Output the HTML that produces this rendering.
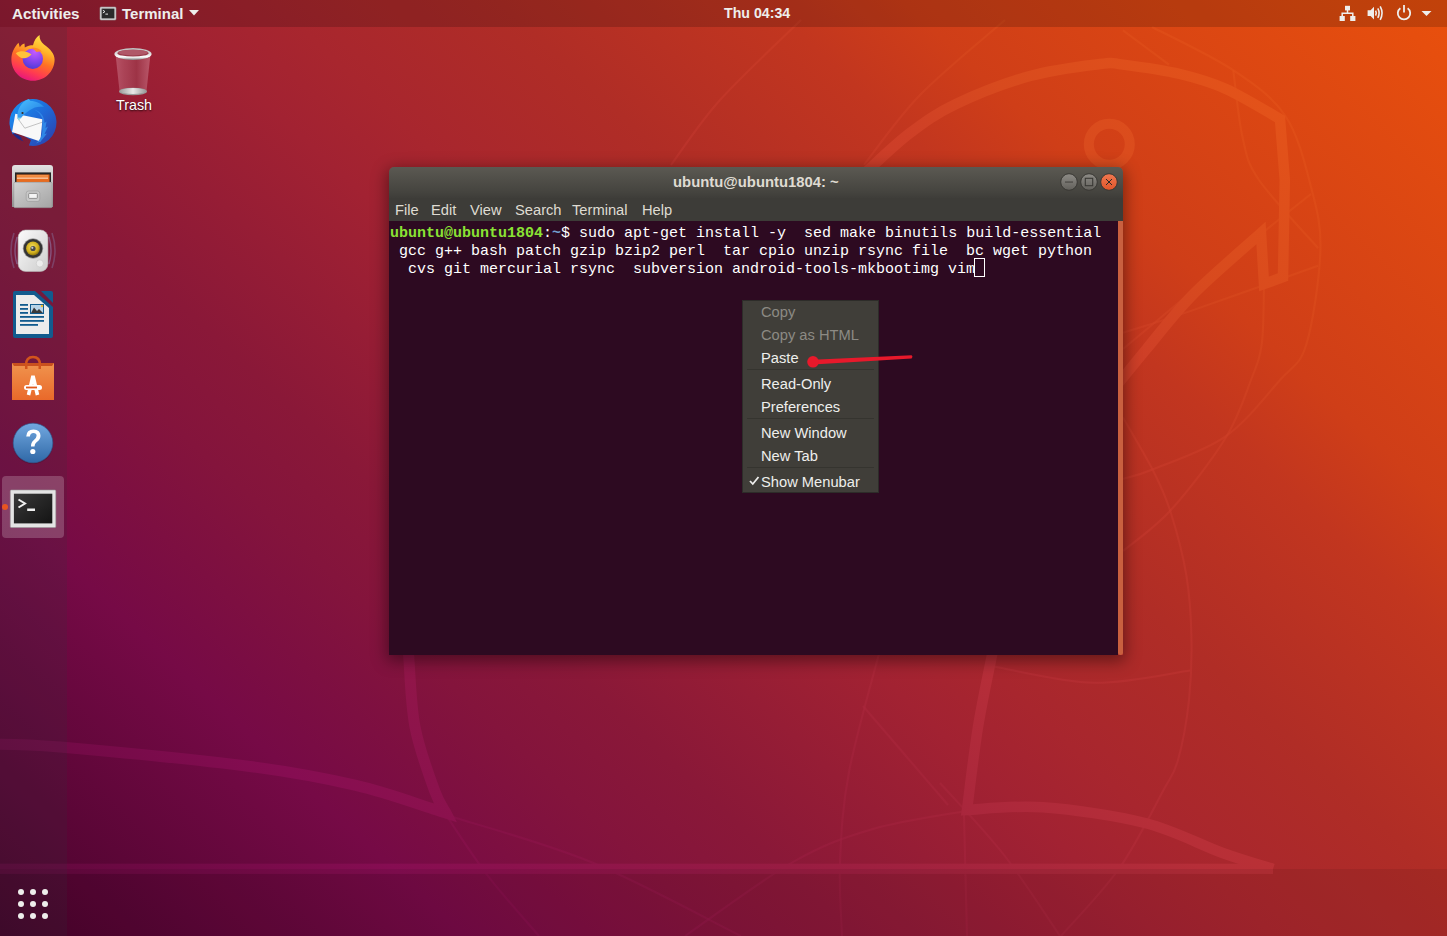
<!DOCTYPE html>
<html><head><meta charset="utf-8">
<style>
*{margin:0;padding:0;box-sizing:border-box}
html,body{width:1447px;height:936px;overflow:hidden}
body{position:relative;font-family:"Liberation Sans",sans-serif;background:#8a1838}
#wall{position:absolute;left:0;top:0;width:1447px;height:936px;
 background:linear-gradient(43deg,rgb(71,3,43) 0%,rgb(85,5,51) 5.6%,rgb(118,10,70) 19%,rgb(132,20,60) 29.4%,rgb(138,24,56) 35%,rgb(162,34,50) 47.3%,rgb(168,38,46) 52%,rgb(176,45,38) 61.3%,rgb(194,54,31) 72.1%,rgb(207,62,24) 77.7%,rgb(230,78,14) 97.1%,rgb(233,80,13) 100%);left:0;top:0}
#wallsvg{position:absolute;left:0;top:0}
#bottomband{position:absolute;left:0;top:869px;width:1447px;height:67px;background:rgba(0,0,0,0.07)}
.tb{position:absolute;top:5px;white-space:nowrap}
#topbar{position:absolute;left:0;top:0;width:1447px;height:27px;background:rgba(0,0,0,0.17);color:#eeeeec;font-weight:bold;font-size:14px}
#dock{position:absolute;left:0;top:27px;width:67px;height:909px;background:rgba(50,56,58,0.17)}
.di{position:absolute;left:9px;width:48px;height:48px}
#win{position:absolute;left:389px;top:167px;width:734px;height:488px;border-radius:5px 5px 0 0;box-shadow:0 4px 16px 2px rgba(0,0,0,0.42);overflow:hidden}
#title{position:absolute;left:0;top:0;width:734px;height:31px;background:linear-gradient(#5b5952,#45443f 80%,#3e3d39);color:#dfdbd2;font-weight:bold}
#menubar{position:absolute;left:0;top:31px;width:734px;height:23px;background:#3d3c38;color:#dfdbd2;font-size:14.7px}
#menubar span{position:absolute;top:4px;white-space:nowrap}
#term{position:absolute;left:0;top:54px;padding-top:4px;padding-left:1px;width:729px;height:434px;background:#2d0a21;font-family:"Liberation Mono",monospace;font-size:15px;line-height:18px;color:#ffffff;white-space:pre}
#sb{position:absolute;left:729px;top:54px;width:5px;height:434px;background:#c9603f;border-radius:0 0 3px 3px}
#menu{position:absolute;left:742px;top:300px;width:137px;height:193px;background:#403e39;border:1px solid #2d2c29;font-size:14.7px;color:#eeeeec}
#menu .it{position:absolute;left:18px}
#menu .dis{color:#8c8a84}
#menu .sep{position:absolute;left:4px;width:127px;height:1px;background:#35342f}
</style></head><body>
<div id="wall"></div>
<svg id="wallsvg" width="1447" height="936" viewBox="0 0 1447 936">
<defs><linearGradient id="lg" gradientUnits="userSpaceOnUse" x1="153.7" y1="1078.9" x2="1293.3" y2="-142.9">
<stop offset="0" stop-color="rgb(88,6,55)"/><stop offset="0.19" stop-color="rgb(134,13,82)"/><stop offset="0.35" stop-color="rgb(152,28,66)"/><stop offset="0.52" stop-color="rgb(182,46,56)"/><stop offset="0.72" stop-color="rgb(206,63,39)"/><stop offset="0.78" stop-color="rgb(216,74,30)"/><stop offset="1" stop-color="rgb(240,92,20)"/>
</linearGradient></defs>
<path d="M866.0 172.0 C873.3 165.5 895.0 144.3 910.0 133.0 C925.0 121.7 936.0 113.5 956.0 104.0 C976.0 94.5 1006.0 82.7 1030.0 76.0 C1054.0 69.3 1084.5 65.9 1100.0 64.0 C1115.5 62.1 1109.7 62.9 1123.0 64.6 C1136.3 66.3 1162.8 69.9 1180.0 74.0 C1197.2 78.1 1209.3 81.5 1226.0 89.0 C1242.7 96.5 1271.0 114.0 1280.0 119.0 L1284.8 180 L1283 277 L1264 284 L1261 233  C1249.8 243.2 1212.6 274.7 1193.5 294.0 C1174.4 313.3 1161.2 331.3 1146.5 349.0 C1131.8 366.7 1111.9 391.5 1105.0 400.0" stroke="url(#lg)" stroke-width="10.5" fill="none" stroke-linejoin="miter"/>
<circle cx="1109.3" cy="144.3" r="20.5" stroke="url(#lg)" stroke-width="10" fill="none"/>
<path d="M407.0 645.0 C407.3 646.7 407.3 641.3 408.6 655.0 C409.9 668.7 410.6 704.3 415.0 727.0 C419.4 749.7 429.5 776.7 434.7 791.0 C439.9 805.3 444.1 809.3 446.0 813.0  C443.8 812.3 447.5 813.3 432.5 808.7 C417.5 804.1 386.4 792.4 356.0 785.4 C325.6 778.4 299.3 772.9 250.0 766.5 C200.7 760.1 103.3 750.8 60.0 747.0 C16.7 743.2 1.7 744.5 -10.0 744.0" stroke="url(#lg)" stroke-width="11" fill="none" stroke-linejoin="miter"/>
<path d="M994.0 645.0 C993.7 646.7 994.7 641.3 992.0 655.0 C989.3 668.7 982.2 701.2 978.0 727.0 C973.8 752.8 968.8 796.2 967.0 810.0  C979.6 809.5 1012.9 805.1 1042.6 807.3 C1072.3 809.5 1115.1 815.4 1145.0 823.0 C1174.9 830.6 1200.7 845.0 1222.0 852.7 C1243.3 860.4 1264.5 866.3 1273.0 869.0" stroke="url(#lg)" stroke-width="10.5" fill="none" stroke-linejoin="miter"/>
<rect x="0" y="863.7" width="1273" height="10.2" fill="url(#lg)"/>
<path d="M446.0 815.0 C470.2 822.8 541.8 841.8 591.0 862.0 C640.2 882.2 716.0 923.7 741.0 936.0" stroke="url(#lg)" stroke-width="2" fill="none" opacity="0.55"/>
<path d="M446.0 815.0 C453.0 825.2 472.5 855.8 488.0 876.0 C503.5 896.2 530.5 926.0 539.0 936.0" stroke="url(#lg)" stroke-width="2" fill="none" opacity="0.55"/>
<path d="M685.0 936.0 C703.0 923.7 761.7 879.8 793.0 862.0 C824.3 844.2 844.2 837.5 873.0 829.0 C901.8 820.5 950.5 814.0 966.0 811.0" stroke="url(#lg)" stroke-width="2" fill="none" opacity="0.55"/>
<path d="M880.0 650.0 C874.8 670.3 855.7 736.7 849.0 772.0 C842.3 807.3 841.2 834.7 840.0 862.0 C838.8 889.3 841.7 923.7 842.0 936.0" stroke="url(#lg)" stroke-width="2" fill="none" opacity="0.55"/>
<path d="M964.0 815.0 C964.5 835.2 966.5 915.8 967.0 936.0" stroke="url(#lg)" stroke-width="2" fill="none" opacity="0.55"/>
<path d="M863.0 706.0 C877.2 722.5 933.8 788.5 948.0 805.0" stroke="url(#lg)" stroke-width="2" fill="none" opacity="0.55"/>
<path d="M995.0 666.7 C1011.5 669.4 1061.5 682.2 1094.0 682.8 C1126.5 683.4 1174.0 672.5 1190.0 670.5" stroke="url(#lg)" stroke-width="2" fill="none" opacity="0.55"/>
<path d="M1123.0 417.6 C1128.1 426.7 1145.8 456.1 1153.8 472.0 C1161.8 487.9 1165.5 495.8 1170.9 513.0 C1176.3 530.2 1182.9 554.4 1186.3 575.0 C1189.7 595.6 1191.0 615.7 1191.4 636.5 C1191.9 657.3 1191.2 679.4 1189.0 700.0 C1186.8 720.6 1182.3 744.8 1178.0 760.0 C1173.7 775.2 1172.8 773.0 1163.0 791.0 C1153.2 809.0 1136.5 843.8 1119.5 868.0 C1102.5 892.2 1070.8 924.7 1061.0 936.0" stroke="url(#lg)" stroke-width="2" fill="none" opacity="0.55"/>
<path d="M940.0 783.0 C950.7 795.0 984.0 829.5 1004.0 855.0 C1024.0 880.5 1050.7 922.5 1060.0 936.0" stroke="url(#lg)" stroke-width="2" fill="none" opacity="0.55"/>
<path d="M671.0 165.0 C679.2 154.2 698.3 124.2 720.0 100.0 C741.7 75.8 787.5 33.3 801.0 20.0" stroke="url(#lg)" stroke-width="2" fill="none" opacity="0.55"/>
<path d="M864.0 165.0 C873.3 153.3 896.5 119.2 920.0 95.0 C943.5 70.8 990.8 32.5 1005.0 20.0" stroke="url(#lg)" stroke-width="2" fill="none" opacity="0.55"/>
<path d="M1123.0 30.4 C1130.7 36.1 1161.3 58.9 1169.0 64.6" stroke="url(#lg)" stroke-width="2" fill="none" opacity="0.55"/>
<path d="M1152.0 27.0 C1165.4 34.1 1210.2 54.9 1232.4 69.7 C1254.6 84.5 1272.3 96.5 1285.4 116.0 C1298.5 135.6 1305.2 164.6 1311.0 187.0 C1316.8 209.4 1321.2 224.2 1320.4 250.5 C1319.6 276.8 1313.0 322.9 1306.3 344.5 C1299.6 366.1 1293.5 364.7 1280.0 380.0 C1266.5 395.3 1246.6 421.6 1225.6 436.4 C1204.6 451.2 1170.9 461.9 1153.8 469.0 C1136.7 476.1 1128.1 477.3 1123.0 479.0" stroke="url(#lg)" stroke-width="2" fill="none" opacity="0.55"/>
<path d="M1233.3 70.6 C1234.9 81.8 1238.4 119.8 1242.7 138.0 C1247.0 156.2 1246.5 161.7 1259.0 180.0 C1271.5 198.3 1308.2 236.7 1318.0 248.0" stroke="url(#lg)" stroke-width="2" fill="none" opacity="0.55"/>
<path d="M1311.0 194.0 C1303.2 200.3 1295.3 205.9 1264.0 231.7 C1232.7 257.5 1146.5 329.4 1123.0 349.0" stroke="url(#lg)" stroke-width="2" fill="none" opacity="0.55"/>
<path d="M1318.0 265.8 C1296.5 273.4 1221.3 300.4 1188.8 311.6 C1156.3 322.8 1134.0 329.3 1123.0 332.8" stroke="url(#lg)" stroke-width="2" fill="none" opacity="0.55"/>
<path d="M1264.0 288.0 C1263.6 297.4 1263.9 329.2 1261.7 344.5 C1259.5 359.8 1257.0 364.4 1251.0 380.0 C1245.0 395.6 1238.9 416.3 1225.6 438.0 C1212.2 459.7 1188.0 491.2 1170.9 510.0 C1153.8 528.8 1131.0 544.2 1123.0 551.0" stroke="url(#lg)" stroke-width="2" fill="none" opacity="0.55"/>
</svg>
<div id="bottomband"></div>
<div id="topbar">
 <span class="tb" style="left:12px;font-size:15.2px">Activities</span>
 <svg style="position:absolute;left:99px;top:6px" width="18" height="15" viewBox="0 0 18 15">
  <rect x="1" y="1" width="16" height="13" rx="1" fill="#d8d8d8" stroke="#9a9a9a" stroke-width="0.6"/>
  <rect x="2.6" y="2.6" width="12.8" height="9.8" fill="#2a2a2a"/>
  <path d="M3.8 4.2 L6 5.6 L3.8 7" stroke="#e8e8e8" stroke-width="1" fill="none"/>
  <rect x="6.4" y="7.6" width="2.6" height="1" fill="#e8e8e8"/>
 </svg>
 <span class="tb" style="left:122px;font-size:15px">Terminal</span>
 <svg style="position:absolute;left:189px;top:10px" width="10" height="6" viewBox="0 0 10 6"><path d="M0 0 L10 0 L5 5.5 Z" fill="#eeeeec"/></svg>
 <span class="tb" style="left:724px;font-size:14.2px">Thu 04:34</span>
 <svg style="position:absolute;left:1339px;top:5px" width="17" height="17" viewBox="0 0 17 17">
  <rect x="6" y="0.8" width="5" height="4.6" fill="#eeeeec"/>
  <path d="M8.5 5 V8.2 M3.2 11 V8.2 H13.8 V11" stroke="#eeeeec" stroke-width="1.5" fill="none"/>
  <rect x="0.6" y="11" width="5.2" height="5" fill="#eeeeec"/>
  <rect x="11.2" y="11" width="5.2" height="5" fill="#eeeeec"/>
 </svg>
 <svg style="position:absolute;left:1367px;top:5px" width="17" height="16" viewBox="0 0 17 16">
  <path d="M0.6 5.2 H3.6 L7 1.8 V14.4 L3.6 11 H0.6 Z" fill="#eeeeec"/>
  <path d="M8.6 5.6 Q10 8.1 8.6 10.6" stroke="#eeeeec" stroke-width="1.6" fill="none"/>
  <path d="M10.8 3.4 Q13.4 8.1 10.8 12.8" stroke="#eeeeec" stroke-width="1.6" fill="none"/>
  <path d="M13.2 1.4 Q16.9 8.1 13.2 14.8" stroke="#eeeeec" stroke-width="1.6" fill="none"/>
 </svg>
 <svg style="position:absolute;left:1396px;top:4px" width="16" height="17" viewBox="0 0 16 17">
  <path d="M4.4 4.2 A6.2 6.2 0 1 0 11.6 4.2" stroke="#eeeeec" stroke-width="1.8" fill="none"/>
  <path d="M8 1 V8.6" stroke="#eeeeec" stroke-width="1.8"/>
 </svg>
 <svg style="position:absolute;left:1421px;top:10px" width="11" height="7" viewBox="0 0 11 7"><path d="M0.5 1 L10.5 1 L5.5 6 Z" fill="#eeeeec"/></svg>
</div>
<div id="dock">
 <!-- firefox -->
 <svg class="di" style="top:7px" width="48" height="48" viewBox="0 0 48 48">
  <defs>
   <linearGradient id="ffo" x1="0.75" y1="0" x2="0.35" y2="1">
    <stop offset="0" stop-color="#ffe84a"/><stop offset="0.3" stop-color="#ffb62a"/><stop offset="0.55" stop-color="#ff7124"/><stop offset="0.8" stop-color="#ff3a52"/><stop offset="1" stop-color="#e6157e"/>
   </linearGradient>
   <radialGradient id="ffp" cx="0.6" cy="0.15" r="0.9">
    <stop offset="0" stop-color="#c55cff"/><stop offset="0.5" stop-color="#8a45f0"/><stop offset="1" stop-color="#4a3ad6"/>
   </radialGradient>
  </defs>
  <path d="M24 46.8 C12 46.8 2.4 37.2 2.4 25.5 C2.4 19 5 13.5 9.5 8.8 L10.8 13.2 C12 11.5 13.5 10 15.5 9.6 L15.8 13.4 C18.5 11.8 21 11.2 24 11.2 C25 6.5 27.5 3 30.6 1 C30.2 5 32 8 35 10.5 C41.5 15 45.6 20 45.6 25.5 C45.6 37.2 36 46.8 24 46.8 Z" fill="url(#ffo)"/>
  <circle cx="23.8" cy="24.8" r="10.2" fill="url(#ffp)"/>
  <path d="M6.8 19.2 C11 16.5 17 16.5 22.5 20.5 C20 23 17 24.6 14 24.2 C11 23.8 8.6 21.8 6.8 19.2 Z" fill="#ffc23a"/>
  <path d="M22 14.2 C26 13.2 30.5 14.5 33 17.8 C31 17.2 29 17.4 27.5 18 C26 16 24 14.8 22 14.2 Z" fill="#ff8a2a"/>
 </svg>
 <!-- thunderbird -->
 <svg class="di" style="top:71px" width="48" height="48" viewBox="0 0 48 48">
  <defs>
   <linearGradient id="tbb" x1="0.1" y1="0.1" x2="0.9" y2="0.9">
    <stop offset="0" stop-color="#1a8ff0"/><stop offset="0.5" stop-color="#1f6ad8"/><stop offset="1" stop-color="#2a44b0"/>
   </linearGradient>
   <linearGradient id="tbh" x1="0" y1="0" x2="1" y2="1">
    <stop offset="0" stop-color="#4cc0ff"/><stop offset="1" stop-color="#1d78e0"/>
   </linearGradient>
  </defs>
  <path d="M3.65 36.25 A23.5 23.5 0 1 1 19.9 47.6 L22 42 L8 34 Z" fill="url(#tbb)"/>
  <path d="M6.3 15.8 L33.5 21.3 L31.3 43.5 L3 34 Z" fill="#f8f8f8"/>
  <path d="M8.6 20.2 L15.8 30.2 L33.5 24.1" stroke="#8a8a8a" stroke-width="0.5" fill="none"/>
  <path d="M8.6 20.5 C7.5 12 12 4 19.7 1 L21.5 3 C27 3 32 5.5 35 9 C30 8 25 9 21 12 C17 14.5 14 17.5 12 20 Z" fill="url(#tbh)"/>
  <path d="M8.2 19.5 L12.5 19.8 L9.8 22.5 Z" fill="#8ad8e8"/>
  <circle cx="13.5" cy="15" r="1.1" fill="#3a2a20"/>
  <path d="M25 11.5 C31 13 35.5 18 35.5 25 L37.5 23.5 L36.5 30 L39 28.5 L35.5 36 L38 35.5 L32 43 L27 45.5 C32 41 34 36 33.2 30 L33.5 21.3 C32 16.5 28.5 13 25 11.5 Z" fill="#2f86e6"/>
  <path d="M3.2 35 C6 39 10 42 14.7 43.5 L11.5 40.2 L13.5 40.5 L9 37 Z" fill="#1c2a8a"/>
 </svg>
 <!-- files -->
 <svg class="di" style="top:135px" width="48" height="48" viewBox="0 0 48 48">
  <defs>
   <linearGradient id="fg1" x1="0" y1="0" x2="0" y2="1"><stop offset="0" stop-color="#e2e2e2"/><stop offset="0.5" stop-color="#bdbdbd"/><stop offset="1" stop-color="#8e8e8e"/></linearGradient>
   <linearGradient id="fg2" x1="0" y1="0" x2="1" y2="1"><stop offset="0" stop-color="#d2d2d2"/><stop offset="1" stop-color="#a4a4a4"/></linearGradient>
  </defs>
  <path d="M3 6 Q3 3 6 3 L41 3 Q44 3 44 6 L44 45 L3 45 Z" fill="url(#fg1)"/>
  <rect x="6" y="10.4" width="36" height="9.6" fill="#262626"/>
  <rect x="7.5" y="12.5" width="33" height="7.5" fill="#e86c20"/>
  <rect x="8" y="13.2" width="31" height="1.4" fill="#f59a50"/>
  <rect x="8" y="15.6" width="31" height="1" fill="#fff2dc"/>
  <rect x="4.8" y="20.3" width="38.4" height="25.4" rx="1.2" fill="url(#fg2)" stroke="#8c8c8c" stroke-width="0.5"/>
  <rect x="17.2" y="29" width="13.6" height="10.5" rx="2.4" fill="#c8c8c8" stroke="#9a9a9a" stroke-width="0.6"/>
  <rect x="19.7" y="31.4" width="8.6" height="5" rx="0.8" fill="#f4f4f4" stroke="#5a5a5a" stroke-width="0.6"/>
 </svg>
 <!-- rhythmbox -->
 <svg class="di" style="top:199px" width="48" height="48" viewBox="0 0 48 48">
  <defs>
   <radialGradient id="rbc" cx="0.45" cy="0.4" r="0.6"><stop offset="0" stop-color="#f4e060"/><stop offset="0.7" stop-color="#cfae1c"/><stop offset="1" stop-color="#8a7410"/></radialGradient>
   <linearGradient id="rbb" x1="0" y1="0" x2="1" y2="1"><stop offset="0" stop-color="#fbfbfb"/><stop offset="1" stop-color="#cdcdcd"/></linearGradient>
  </defs>
  <path d="M5 7 Q-1 24.5 5 42" stroke="#8a8ab8" stroke-width="1.6" fill="none" opacity="0.35"/>
  <path d="M43 7 Q49 24.5 43 42" stroke="#8a8ab8" stroke-width="1.6" fill="none" opacity="0.35"/>
  <path d="M8 11 Q4 24.5 8 38" stroke="#9a9ad0" stroke-width="1.4" fill="none" opacity="0.45"/>
  <path d="M40 11 Q44 24.5 40 38" stroke="#9a9ad0" stroke-width="1.4" fill="none" opacity="0.45"/>
  <rect x="9.1" y="4" width="29.8" height="41.4" rx="7.5" fill="url(#rbb)" stroke="#b8b8b8" stroke-width="0.6"/>
  <circle cx="24" cy="22.5" r="10.2" fill="#9a9a9a"/>
  <circle cx="24" cy="22.5" r="9.4" fill="#343434"/>
  <circle cx="24" cy="22.5" r="6.9" fill="url(#rbc)"/>
  <circle cx="24" cy="22.5" r="2.6" fill="#4a4a4a"/>
  <circle cx="23.3" cy="21.8" r="1.1" fill="#c8c8c8"/>
  <circle cx="30.8" cy="37.4" r="3.6" fill="#ececec" stroke="#c4c4c4" stroke-width="0.6"/>
 </svg>
 <!-- writer -->
 <svg class="di" style="top:263px" width="48" height="48" viewBox="0 0 48 48">
  <path d="M4 3 Q4 1 6 1 L26 1 L44 17 L44 46 Q44 48 42 48 L6 48 Q4 48 4 46 Z" fill="#125b8e"/>
  <path d="M32 1 L42 1 Q44 1 44 3 L44 13 Z" fill="#125b8e"/>
  <path d="M7 5 L25 5 L40 18 L40 44 L7 44 Z" fill="#ececec"/>
  <rect x="11" y="14" width="8" height="1.8" fill="#125b8e"/>
  <rect x="11" y="18" width="8" height="1.8" fill="#125b8e"/>
  <rect x="11" y="22" width="8" height="1.8" fill="#125b8e"/>
  <rect x="21" y="14" width="14" height="10" fill="#125b8e"/>
  <rect x="22" y="15" width="12" height="8" fill="#b8d4e8"/>
  <path d="M22 23 L25 17.5 L28 21 L30 19 L34 23 Z" fill="#3a3a3a"/>
  <circle cx="33" cy="16" r="1.2" fill="#f0c030"/>
  <rect x="11" y="26" width="24" height="1.8" fill="#125b8e"/>
  <rect x="11" y="30" width="24" height="1.8" fill="#125b8e"/>
  <rect x="11" y="34" width="18" height="1.8" fill="#125b8e"/>
 </svg>
 <!-- software -->
 <svg class="di" style="top:328px" width="48" height="48" viewBox="0 0 48 48">
  <defs><linearGradient id="swg" x1="0" y1="0" x2="0" y2="1"><stop offset="0" stop-color="#f0944e"/><stop offset="1" stop-color="#e9692a"/></linearGradient></defs>
  <path d="M17 10 Q17 2 24 2 Q31 2 31 10" stroke="#d2541c" stroke-width="2.6" fill="none"/>
  <path d="M3 8 L45 8 L45 45 L3 45 Z" fill="url(#swg)"/>
  <path d="M3 8 L45 8 L43 11 L5 11 Z" fill="#c9501e"/>
  <rect x="16" y="8" width="2.5" height="6" fill="#d2541c"/>
  <rect x="29.5" y="8" width="2.5" height="6" fill="#d2541c"/>
  <path d="M19.5 40 L24 21 L28.5 40" stroke="#fff" stroke-width="3.6" fill="none" stroke-linejoin="bevel"/>
  <rect x="15" y="30" width="18" height="5" rx="2.5" fill="#fff"/>
  <rect x="17" y="31.6" width="11" height="1.8" fill="#e05a1e"/>
 </svg>
 <!-- help -->
 <svg class="di" style="top:392px" width="48" height="48" viewBox="0 0 48 48">
  <defs><linearGradient id="hg" x1="0" y1="0" x2="0" y2="1"><stop offset="0" stop-color="#72a8e0"/><stop offset="1" stop-color="#2f68a6"/></linearGradient></defs>
  <circle cx="24" cy="25" r="20" fill="#000" opacity="0.15"/>
  <circle cx="24" cy="24" r="19.8" fill="url(#hg)" stroke="#2a5e96" stroke-width="0.6"/>
  <path d="M17.2 17.5 Q17.5 10.5 24.5 10.5 Q31.5 10.8 31.5 16.8 Q31.5 20.5 27.8 23 Q25.5 24.6 25.5 27.5 L22 27.5 Q21.8 23.5 24.6 21.2 Q27.6 19 27.6 16.8 Q27.6 14 24.4 14 Q21.2 14 20.9 17.5 Z" fill="#fff"/>
  <circle cx="23.8" cy="32.5" r="2.6" fill="#fff"/>
 </svg>
 <!-- terminal active -->
 <div style="position:absolute;left:2px;top:449px;width:62px;height:62px;border-radius:4px;background:rgba(255,255,255,0.2)"></div>
 <div style="position:absolute;left:2px;top:477px;width:6px;height:6px;border-radius:3px;background:#e95420;margin-left:0"></div>
 <svg class="di" style="top:456px" width="48" height="48" viewBox="0 0 48 48">
  <defs><linearGradient id="tmg" x1="0" y1="0" x2="1" y2="1"><stop offset="0" stop-color="#3a3a3a"/><stop offset="0.5" stop-color="#262626"/><stop offset="1" stop-color="#141414"/></linearGradient></defs>
  <rect x="1.3" y="7" width="45.5" height="37.5" rx="1" fill="#e4e4e4" stroke="#9a9a9a" stroke-width="0.6"/>
  <rect x="4.9" y="10.7" width="38.4" height="29.7" fill="url(#tmg)"/>
  <path d="M9.5 16.5 L16 20.5 L9.5 24.5" stroke="#f0f0f0" stroke-width="2" fill="none"/>
  <rect x="18.2" y="25.5" width="7.8" height="2.5" fill="#f0f0f0"/>
 </svg>
</div>
<div style="position:absolute;left:15px;top:886px;width:36px;height:36px">
 <svg width="36" height="36" viewBox="0 0 36 36" fill="#eeeeec">
  <circle cx="6" cy="6" r="3"/><circle cx="18" cy="6" r="3"/><circle cx="30" cy="6" r="3"/>
  <circle cx="6" cy="18" r="3"/><circle cx="18" cy="18" r="3"/><circle cx="30" cy="18" r="3"/>
  <circle cx="6" cy="30" r="3"/><circle cx="18" cy="30" r="3"/><circle cx="30" cy="30" r="3"/>
 </svg>
</div>
<!-- trash -->
<svg style="position:absolute;left:109px;top:45px" width="48" height="52" viewBox="0 0 48 52">
 <defs>
  <linearGradient id="trb" x1="0" y1="0" x2="1" y2="0"><stop offset="0" stop-color="#d890a0" stop-opacity="0.45"/><stop offset="0.25" stop-color="#c07080" stop-opacity="0.45"/><stop offset="0.6" stop-color="#a04858" stop-opacity="0.5"/><stop offset="1" stop-color="#d890a0" stop-opacity="0.5"/></linearGradient>
  <linearGradient id="trr" x1="0" y1="0" x2="0" y2="1"><stop offset="0" stop-color="#b8b8b8"/><stop offset="0.45" stop-color="#dcdcdc"/><stop offset="0.75" stop-color="#ffffff"/><stop offset="1" stop-color="#7a7a7a"/></linearGradient>
  <linearGradient id="trf" x1="0" y1="0" x2="1" y2="0"><stop offset="0" stop-color="#a0a0a0"/><stop offset="0.5" stop-color="#e8e8e8"/><stop offset="1" stop-color="#9a9a9a"/></linearGradient>
 </defs>
 <path d="M6.5 9 L10.5 46 Q24 51 37.5 46 L41.5 9 Z" fill="url(#trb)"/>
 <ellipse cx="24" cy="46.5" rx="14" ry="3.8" fill="#9a9a9a"/>
 <ellipse cx="24" cy="46" rx="13" ry="3" fill="url(#trf)"/>
 <ellipse cx="24" cy="9" rx="18.6" ry="6" fill="url(#trr)"/>
 <ellipse cx="24" cy="8.2" rx="15.6" ry="3.4" fill="#9a3a4a"/>
 <ellipse cx="24" cy="7.6" rx="15" ry="2.8" fill="#b05868"/>
</svg>
<div style="position:absolute;left:100px;top:97px;width:68px;text-align:center;color:#fff;font-size:14.3px;text-shadow:0 1px 2px rgba(0,0,0,0.8)">Trash</div>
<div id="win">
 <div id="title"><span style="position:absolute;left:284px;top:7px;font-size:14.85px;white-space:nowrap">ubuntu@ubuntu1804: ~</span>
  <svg style="position:absolute;left:670px;top:5px" width="60" height="20" viewBox="0 0 60 20">
   <defs>
    <linearGradient id="wbg" x1="0" y1="0" x2="0" y2="1"><stop offset="0" stop-color="#8e8c87"/><stop offset="1" stop-color="#62605b"/></linearGradient>
    <linearGradient id="wbc" x1="0" y1="0" x2="0" y2="1"><stop offset="0" stop-color="#f07850"/><stop offset="1" stop-color="#e0552a"/></linearGradient>
   </defs>
   <circle cx="10" cy="10" r="8.3" fill="url(#wbg)" stroke="#393834" stroke-width="1"/>
   <rect x="6" y="9.6" width="8" height="0.9" fill="#3a3935"/>
   <circle cx="30" cy="10" r="8.3" fill="url(#wbg)" stroke="#393834" stroke-width="1"/>
   <rect x="26.3" y="6.3" width="7.4" height="7.4" fill="none" stroke="#3a3935" stroke-width="1.1"/>
   <circle cx="50" cy="10" r="8.3" fill="url(#wbc)" stroke="#393834" stroke-width="1"/>
   <path d="M47 7 L53 13 M53 7 L47 13" stroke="#2a2a28" stroke-width="1"/>
  </svg>
 </div>
 <div id="menubar"><span style="left:6px">File</span><span style="left:42px">Edit</span><span style="left:81px">View</span><span style="left:126px">Search</span><span style="left:183px">Terminal</span><span style="left:253px">Help</span></div>
 <div id="term"><span style="color:#8ae234;font-weight:bold">ubuntu@ubuntu1804</span>:<span style="color:#729fcf;font-weight:bold">~</span>$ sudo apt-get install -y  sed make binutils build-essential
 gcc g++ bash patch gzip bzip2 perl  tar cpio unzip rsync file  bc wget python
  cvs git mercurial rsync  subversion android-tools-mkbootimg vim</div>
 <div id="sb"></div>
 <div style="position:absolute;left:585px;top:91px;width:11px;height:19px;border:1px solid #ffffff"></div>
</div>
<div id="menu">
 <div class="it dis" style="top:3px">Copy</div>
 <div class="it dis" style="top:26px">Copy as HTML</div>
 <div class="it" style="top:49px">Paste</div>
 <div class="sep" style="top:68px"></div>
 <div class="it" style="top:75px">Read-Only</div>
 <div class="it" style="top:98px">Preferences</div>
 <div class="sep" style="top:117px"></div>
 <div class="it" style="top:124px">New Window</div>
 <div class="it" style="top:147px">New Tab</div>
 <div class="sep" style="top:166px"></div>
 <svg style="position:absolute;left:6px;top:175px" width="11" height="10" viewBox="0 0 11 10"><path d="M1 5 L3.8 8 L9.5 1" stroke="#eeeeec" stroke-width="1.8" fill="none"/></svg>
 <div class="it" style="top:173px">Show Menubar</div>
</div>
<svg style="position:absolute;left:800px;top:345px" width="120" height="25" viewBox="0 0 120 25">
 <path d="M13 14.8 L111.6 10.3 Q113.4 11.8 111.6 13.4 L13 19.4 Z" fill="#e8192b"/>
 <circle cx="13" cy="16.8" r="5.8" fill="#e8192b"/>
</svg>
</body></html>
